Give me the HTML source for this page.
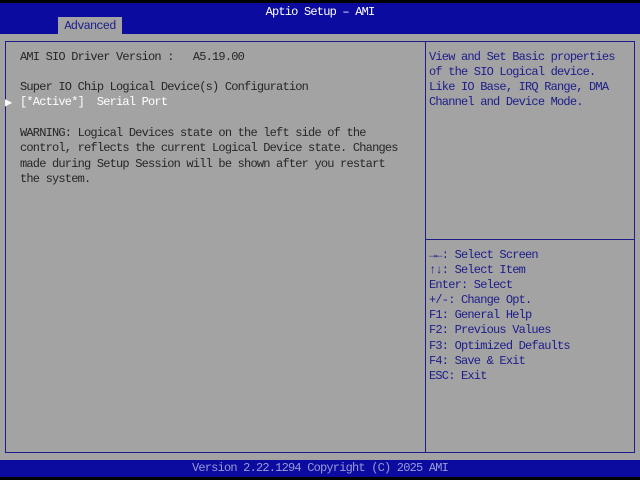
<!DOCTYPE html>
<html><head><style>
body{margin:0;width:640px;height:480px;background:#000;position:relative;overflow:hidden;font-family:"Liberation Mono","DejaVu Sans Mono",monospace;font-size:12px;letter-spacing:-0.8px}
div{position:absolute;white-space:pre}
.hdr{left:0;top:3px;width:640px;height:31px;background:#0b0ba0}
.body{left:0;top:34px;width:640px;height:426px;background:#a3a3a3}
.ftr{left:0;top:460px;width:640px;height:17px;background:#0b0ba0;color:#9a9ad8;text-align:center;line-height:17px}
.t{line-height:15.3px;color:#262626}
.b{line-height:15.1px;color:#1c1c8a}
</style></head><body>
<div class="hdr"></div>
<div style="left:0;top:5px;width:640px;text-align:center;color:#fff;line-height:15px">Aptio Setup – AMI</div>
<div style="left:58px;top:17px;width:64px;height:17px;background:#a3a3a3;color:#1c1c8a;text-align:center;line-height:19px">Advanced</div>
<div class="body"></div>
<div style="left:5px;top:41px;width:628px;height:410px;border:1px solid #1c1c8a"></div>
<div style="left:425px;top:41px;width:1px;height:412px;background:#1c1c8a"></div>
<div style="left:426px;top:239px;width:208px;height:1px;background:#1c1c8a"></div>
<div class="t" style="left:20px;top:50px">AMI SIO Driver Version :   A5.19.00</div>
<div class="t" style="left:20px;top:80px">Super IO Chip Logical Device(s) Configuration</div>
<div style="left:5px;top:96px;line-height:15px;color:#fff;letter-spacing:0">▶</div>
<div style="left:20px;top:95px;line-height:15px;color:#fff">[*Active*]  Serial Port</div>
<div class="t" style="left:20px;top:126px">WARNING: Logical Devices state on the left side of the
control, reflects the current Logical Device state. Changes
made during Setup Session will be shown after you restart
the system.</div>
<div class="b" style="left:429px;top:50px">View and Set Basic properties
of the SIO Logical device.
Like IO Base, IRQ Range, DMA
Channel and Device Mode.</div>
<div class="b" style="left:429px;top:248px">→←: Select Screen
↑↓: Select Item
Enter: Select
+/-: Change Opt.
F1: General Help
F2: Previous Values
F3: Optimized Defaults
F4: Save &amp; Exit
ESC: Exit</div>
<div class="ftr">Version 2.22.1294 Copyright (C) 2025 AMI</div>
</body></html>
